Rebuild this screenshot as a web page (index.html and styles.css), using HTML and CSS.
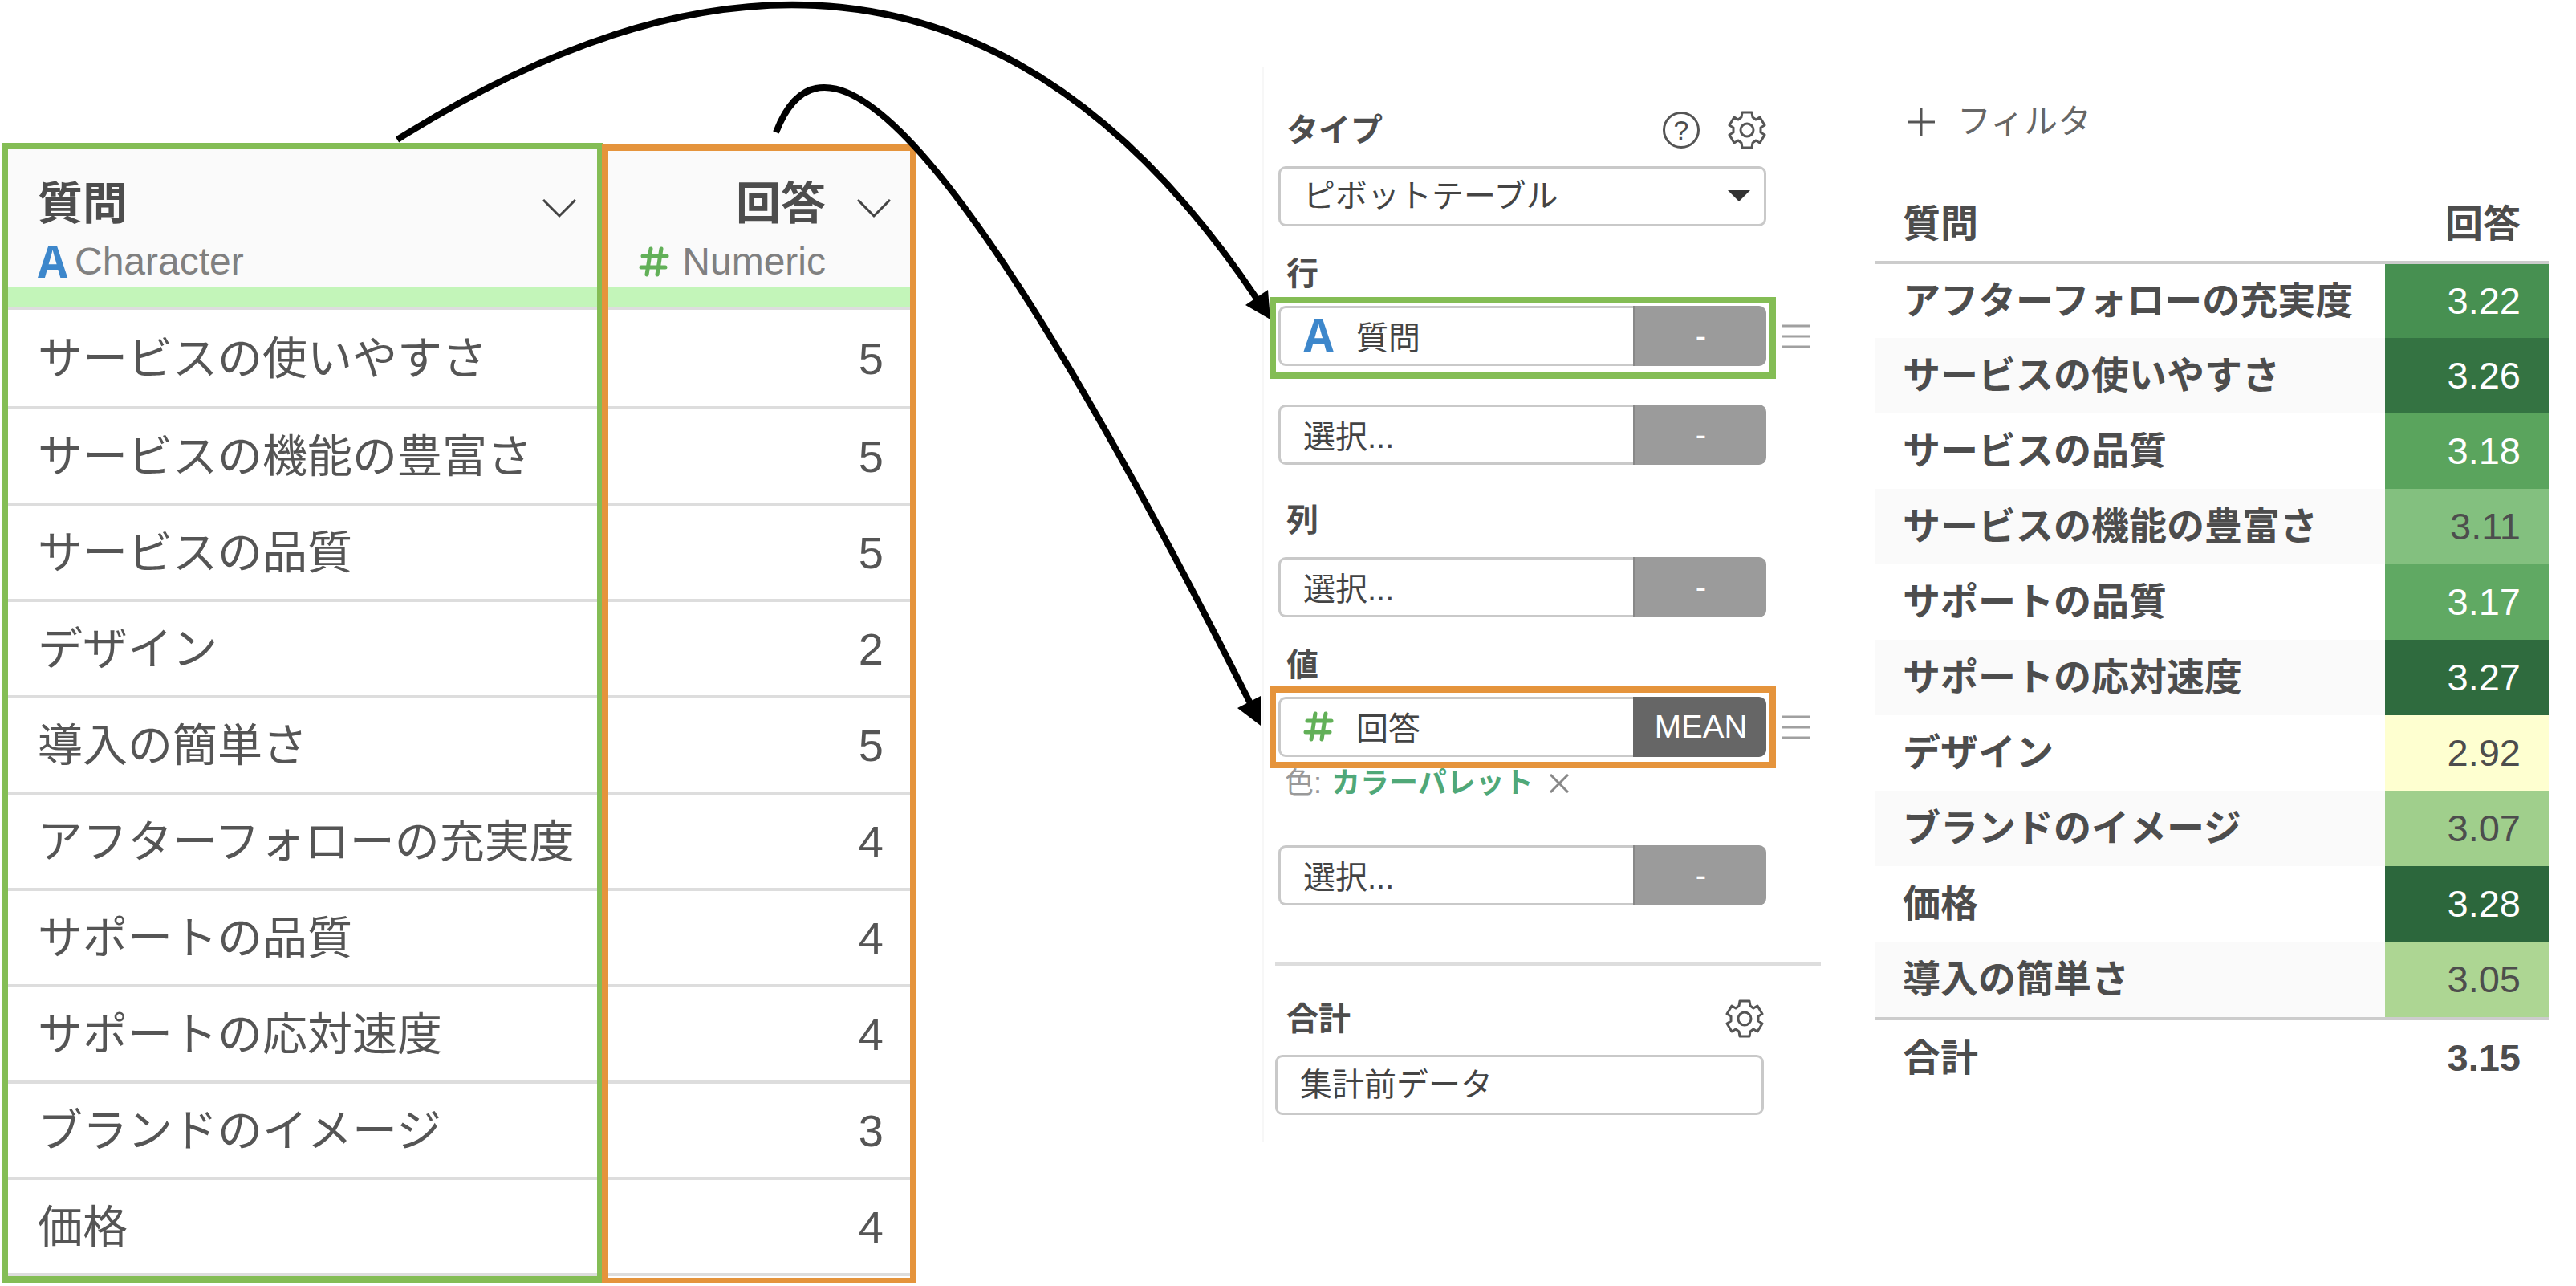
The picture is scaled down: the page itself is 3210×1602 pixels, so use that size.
FILE: index.html
```html
<!DOCTYPE html>
<html lang="ja">
  <head>
    <meta charset="UTF-8" />
    <meta name="viewport" content="width=device-width, initial-scale=1.0" />
    <title>ピボットテーブル</title>
    <link rel="stylesheet" href="styles.css">
  </head>
  <body>
    <!-- Shared icons -->
    <svg class="defs" aria-hidden="true">
      <symbol id="gear" viewBox="-24 -24 48 48">
        <path d="M-6 -22H6L7 -16L11 -13L16 -16L22 -6L17 -3V3L22 6L16 16L11 13L7 16L6 22H-6L-7 16L-11 13L-16 16L-22 6L-17 3V-3L-22 -6L-16 -16L-11 -13L-7 -16Z" />
        <circle r="8" />
      </symbol>
      <symbol id="hash" viewBox="0 0 38 38">
        <path d="M15 3L10 35M28 3L23 35M5 12H35M3 26H33" />
      </symbol>
      <symbol id="chevron" viewBox="0 0 42 24">
        <path d="M1 1L21 21L41 1" />
      </symbol>
      <symbol id="grip" viewBox="0 0 36 30">
        <path d="M0 2H36M0 15H36M0 28H36" />
      </symbol>
    </svg>

    <main class="board">
      <!-- Source data -->
      <section class="source">
        <table class="source-table">
          <thead>
            <tr>
              <th scope="col">
                <div class="col-head">
                  <div class="col-name">
                    <span class="col-title">質問</span>
                    <span class="col-type"><span class="type-char">A</span>Character</span>
                  </div>
                  <button class="col-menu" aria-label="質問 メニュー"><svg class="chevron"><use href="#chevron" /></svg></button>
                </div>
                <div class="quality"></div>
              </th>
              <th scope="col" class="num">
                <div class="col-head">
                  <div class="col-name">
                    <span class="col-title">回答</span>
                    <span class="col-type"><svg class="hash"><use href="#hash" /></svg>Numeric</span>
                  </div>
                  <button class="col-menu" aria-label="回答 メニュー"><svg class="chevron"><use href="#chevron" /></svg></button>
                </div>
                <div class="quality"></div>
              </th>
            </tr>
          </thead>
          <tbody>
            <tr><td>サービスの使いやすさ</td><td class="num">5</td></tr>
            <tr><td>サービスの機能の豊富さ</td><td class="num">5</td></tr>
            <tr><td>サービスの品質</td><td class="num">5</td></tr>
            <tr><td>デザイン</td><td class="num">2</td></tr>
            <tr><td>導入の簡単さ</td><td class="num">5</td></tr>
            <tr><td>アフターフォローの充実度</td><td class="num">4</td></tr>
            <tr><td>サポートの品質</td><td class="num">4</td></tr>
            <tr><td>サポートの応対速度</td><td class="num">4</td></tr>
            <tr><td>ブランドのイメージ</td><td class="num">3</td></tr>
            <tr><td>価格</td><td class="num">4</td></tr>
          </tbody>
        </table>
        <div class="mark mark-question"></div>
        <div class="mark mark-answer"></div>
      </section>

      <!-- Pivot settings -->
      <section class="panel">
        <div class="settings">
          <div class="row">
            <div class="panel-head">
              <label class="label" for="chart-type">タイプ</label>
              <div class="tools">
                <button class="help" aria-label="ヘルプ">?</button>
                <button class="tool" aria-label="設定"><svg class="gear"><use href="#gear" /></svg></button>
              </div>
            </div>
          </div>
          <div class="row row-type">
            <div class="select-wrap">
              <select id="chart-type" class="select"><option>ピボットテーブル</option></select>
            </div>
          </div>

          <div class="group">
            <h3 class="label">行</h3>
            <div class="row">
              <div class="field field-question">
                <button class="column"><span class="type-char">A</span>質問</button>
                <button class="func">-</button>
              </div>
              <button class="grip" aria-label="並べ替え"><svg><use href="#grip" /></svg></button>
            </div>
            <div class="row row-next">
              <div class="field">
                <button class="column">選択...</button>
                <button class="func">-</button>
              </div>
            </div>
          </div>

          <div class="group group-cols">
            <h3 class="label">列</h3>
            <div class="row">
              <div class="field">
                <button class="column">選択...</button>
                <button class="func">-</button>
              </div>
            </div>
          </div>

          <div class="group">
            <h3 class="label">値</h3>
            <div class="row">
              <div class="field field-answer">
                <button class="column"><svg class="hash"><use href="#hash" /></svg>回答</button>
                <button class="func func-on">MEAN</button>
              </div>
              <button class="grip" aria-label="並べ替え"><svg><use href="#grip" /></svg></button>
            </div>
            <div class="color-row">
              <span>色:</span>
              <a href="#">カラーパレット</a>
              <button class="clear" aria-label="色を削除"><svg viewBox="0 0 24 24"><path d="M1 1L23 23M23 1L1 23" /></svg></button>
            </div>
            <div class="row row-next">
              <div class="field">
                <button class="column">選択...</button>
                <button class="func">-</button>
              </div>
            </div>
          </div>
        </div>

        <div class="totals">
          <div class="row">
            <div class="panel-head">
              <label class="label" for="total-type">合計</label>
              <button class="tool" aria-label="合計の設定"><svg class="gear"><use href="#gear" /></svg></button>
            </div>
          </div>
          <div class="row row-type">
            <select id="total-type" class="select"><option>集計前データ</option></select>
          </div>
        </div>
      </section>

      <!-- Pivot result -->
      <section class="result">
        <button class="filter">
          <svg viewBox="0 0 34 34"><path d="M17 0V34M0 17H34" /></svg>フィルタ
        </button>
        <table class="pivot">
          <thead>
            <tr><th scope="col">質問</th><th scope="col" class="value">回答</th></tr>
          </thead>
          <tbody>
            <tr><th scope="row">アフターフォローの充実度</th><td class="value light" style="background-color: #479051">3.22</td></tr>
            <tr><th scope="row">サービスの使いやすさ</th><td class="value light" style="background-color: #347342">3.26</td></tr>
            <tr><th scope="row">サービスの品質</th><td class="value light" style="background-color: #5aa45d">3.18</td></tr>
            <tr><th scope="row">サービスの機能の豊富さ</th><td class="value" style="background-color: #83c07f">3.11</td></tr>
            <tr><th scope="row">サポートの品質</th><td class="value light" style="background-color: #60a963">3.17</td></tr>
            <tr><th scope="row">サポートの応対速度</th><td class="value light" style="background-color: #2f6b3e">3.27</td></tr>
            <tr><th scope="row">デザイン</th><td class="value" style="background-color: #feffd0">2.92</td></tr>
            <tr><th scope="row">ブランドのイメージ</th><td class="value" style="background-color: #a0cf8c">3.07</td></tr>
            <tr><th scope="row">価格</th><td class="value light" style="background-color: #2c673c">3.28</td></tr>
            <tr><th scope="row">導入の簡単さ</th><td class="value" style="background-color: #add693">3.05</td></tr>
          </tbody>
          <tfoot>
            <tr><th scope="row">合計</th><td class="value">3.15</td></tr>
          </tfoot>
        </table>
      </section>

      <!-- Arrows from the source columns to the settings -->
      <svg class="arrows" viewBox="0 0 3210 1000" aria-hidden="true">
        <path class="line" d="M495 174Q1154 -242 1566 372" />
        <path class="line" d="M967 165Q1067 -99 1560 880" />
        <path class="head" d="M1552 380L1580 361L1583 398Z" />
        <path class="head" d="M1542 882L1571 867V904Z" />
      </svg>
    </main>
  </body>
</html>
```
FILE: styles.css
```css
body {
  margin: 0;
  background-color: white;
  color: #4d4d4d;
  font-family: "Liberation Sans", "Noto Sans CJK JP", sans-serif;
  font-size: 40px;
}

button,
select {
  margin: 0;
  padding: 0;
  border: none;
  background: none;
  color: inherit;
  font: inherit;
  cursor: pointer;
}

svg {
  display: block;
  fill: none;
}

table {
  width: 100%;
  border-collapse: separate;
  border-spacing: 0;
  table-layout: fixed;
}

th,
td {
  box-sizing: border-box;
  padding: 0;
  text-align: left;
  white-space: nowrap;
}

.defs {
  position: absolute;
  width: 0;
  height: 0;
}

.board {
  position: relative;
  display: grid;
  grid-template-columns: 1140fr 430fr 697fr 68fr 839fr;
  align-items: start;
  padding: 0 34px 0 2px;
}

.arrows {
  position: absolute;
  top: 0;
  left: 0;
  width: 100%;
  pointer-events: none;
}

.arrows .line {
  stroke: black;
  stroke-width: 8px;
}

.arrows .head {
  fill: black;
}

/* Type icons */
.type-char {
  width: 38px;
  padding-top: 8px;
  color: #3d87cb;
  font-family: "Liberation Mono", monospace;
  font-size: 62px;
  font-weight: bold;
  line-height: 48px;
}

.hash {
  width: 38px;
  height: 38px;
  stroke: #62b058;
  stroke-width: 5px;
  stroke-linecap: round;
}

/* Source data */
.source {
  grid-column: 1;
  position: relative;
  margin-top: 178px;
  padding: 8px;
}

.source-table th {
  border-bottom: 4px solid #ddd;
  background-color: #fafafa;
  font-weight: normal;
}

.source-table th.num {
  width: 384px;
}

.col-head {
  display: flex;
  align-items: flex-start;
  justify-content: space-between;
  box-sizing: border-box;
  height: 172px;
  padding: 34px 32px 0 37px;
}

.num .col-head {
  justify-content: flex-end;
  gap: 39px;
  padding-right: 24px;
}

.col-name {
  display: flex;
  flex-direction: column;
  gap: 8px;
}

.num .col-name {
  align-items: flex-end;
}

.col-title {
  font-size: 56px;
  font-weight: bold;
  line-height: 68px;
}

.col-type {
  display: flex;
  align-items: center;
  gap: 8px;
  color: #808080;
  font-size: 48px;
  line-height: 60px;
}

.num .col-type {
  gap: 16px;
}

.col-menu {
  padding: 28px 0;
}

.chevron {
  width: 42px;
  height: 24px;
  stroke: #444;
  stroke-width: 3px;
}

.quality {
  height: 24px;
  background-color: #c3f5b9;
}

.source-table td {
  height: 120px;
  padding: 2px 0 0 37px;
  border-bottom: 4px solid #ddd;
  color: #555;
  font-size: 56px;
  line-height: 68px;
}

.source-table tbody tr:first-child td {
  height: 124px;
}

.source-table td.num {
  padding-right: 33px;
  text-align: right;
}

.mark {
  position: absolute;
  box-sizing: border-box;
  border: 8px solid #84bd55;
}

.mark-question {
  top: 0;
  right: 390px;
  bottom: 0;
  left: 0;
}

.mark-answer {
  top: 2px;
  right: 0;
  bottom: -2px;
  width: 392px;
  border-color: #e5943c;
}

/* Pivot settings */
.panel {
  grid-column: 3;
  margin-top: 84px;
  padding: 54px 0 34px 14px;
  border-left: 3px solid #f7f7f7;
}

.settings {
  padding: 0 13px 71px 4px;
  border-bottom: 4px solid #ddd;
}

.totals {
  padding: 42px 16px 0 0;
}

.row {
  display: grid;
  grid-template-columns: minmax(0, 1fr) 36px;
  align-items: center;
  column-gap: 19px;
}

.row-type {
  margin-top: 21px;
}

.panel-head {
  display: flex;
  align-items: center;
  justify-content: space-between;
}

.label {
  margin: 0;
  padding-left: 10px;
  font-size: 40px;
  font-weight: bold;
  line-height: 48px;
}

.totals .label {
  padding-left: 14px;
}

.tools {
  display: flex;
  align-items: center;
  gap: 35px;
}

.help {
  box-sizing: border-box;
  width: 46px;
  height: 46px;
  border: 3px solid #555;
  border-radius: 50%;
  font-size: 34px;
  line-height: 40px;
}

.gear {
  width: 48px;
  height: 48px;
  stroke: #555;
  stroke-width: 3px;
  stroke-linejoin: round;
}

.select-wrap {
  position: relative;
}

.select-wrap::after {
  content: "";
  position: absolute;
  top: 30px;
  right: 20px;
  border: 14px solid transparent;
  border-top-color: #333;
  border-bottom: none;
  pointer-events: none;
}

.select {
  appearance: none;
  display: block;
  box-sizing: border-box;
  width: 100%;
  height: 75px;
  padding: 0 28px 2px;
  border: 3px solid #c9c9c9;
  border-radius: 9px;
  background-color: white;
  color: #444;
}

.group {
  margin-top: 35px;
}

.group .label {
  margin-bottom: 16px;
}

.group-cols {
  margin-top: 45px;
}

.group-cols .label {
  margin-bottom: 22px;
}

.row-next {
  margin-top: 48px;
}

.field {
  position: relative;
  display: flex;
  height: 75px;
}

.column {
  display: flex;
  flex: 1;
  align-items: center;
  gap: 28px;
  padding: 0 28px 2px;
  border: 3px solid #c9c9c9;
  border-right: none;
  border-radius: 9px 0 0 9px;
  background-color: white;
  color: #444;
}

.func {
  box-sizing: border-box;
  width: 166px;
  border-left: 3px solid #888;
  border-radius: 0 9px 9px 0;
  background-color: #9b9b9b;
  color: white;
}

.func-on {
  border-color: #666;
  background-color: #666;
}

.field-question::after,
.field-answer::after {
  content: "";
  position: absolute;
  inset: -11px -12px -16px -11px;
  border: 8px solid #84bd55;
  pointer-events: none;
}

.field-answer::after {
  inset: -13px -12px -14px -11px;
  border-color: #e5943c;
}

.grip svg {
  width: 36px;
  height: 30px;
  stroke: #a0a0a0;
  stroke-width: 3px;
}

.color-row {
  display: flex;
  align-items: center;
  gap: 12px;
  margin-top: 9px;
  padding-left: 8px;
  color: #999;
  font-size: 36px;
  line-height: 48px;
}

.color-row + .row-next {
  margin-top: 53px;
}

.color-row a {
  color: #50a878;
  font-weight: bold;
  text-decoration: none;
}

.clear svg {
  width: 24px;
  height: 24px;
  margin-left: 8px;
  stroke: #888;
  stroke-width: 3px;
}

/* Pivot result */
.result {
  grid-column: 5;
  margin-top: 128px;
}

.filter {
  display: flex;
  align-items: center;
  gap: 28px;
  padding-left: 40px;
  color: #666;
  font-size: 42px;
  line-height: 48px;
}

.filter svg {
  width: 34px;
  height: 34px;
  stroke: #555;
  stroke-width: 3px;
}

.pivot {
  margin-top: 55px;
  font-size: 47px;
  line-height: 60px;
}

.pivot th,
.pivot td {
  height: 94px;
  padding-left: 34px;
}

.pivot thead th {
  height: 98px;
  padding-top: 2px;
  border-bottom: 4px solid #ccc;
}

.pivot tbody tr:first-child > * {
  height: 92px;
}

.pivot tbody tr:nth-child(even) {
  background-color: #fafafa;
}

.pivot tfoot th,
.pivot tfoot td {
  height: 98px;
  border-top: 4px solid #ccc;
  font-weight: bold;
}

.pivot .value {
  width: 204px;
  padding-right: 35px;
  padding-left: 0;
  text-align: right;
}

.pivot .light {
  color: white;
}
```
